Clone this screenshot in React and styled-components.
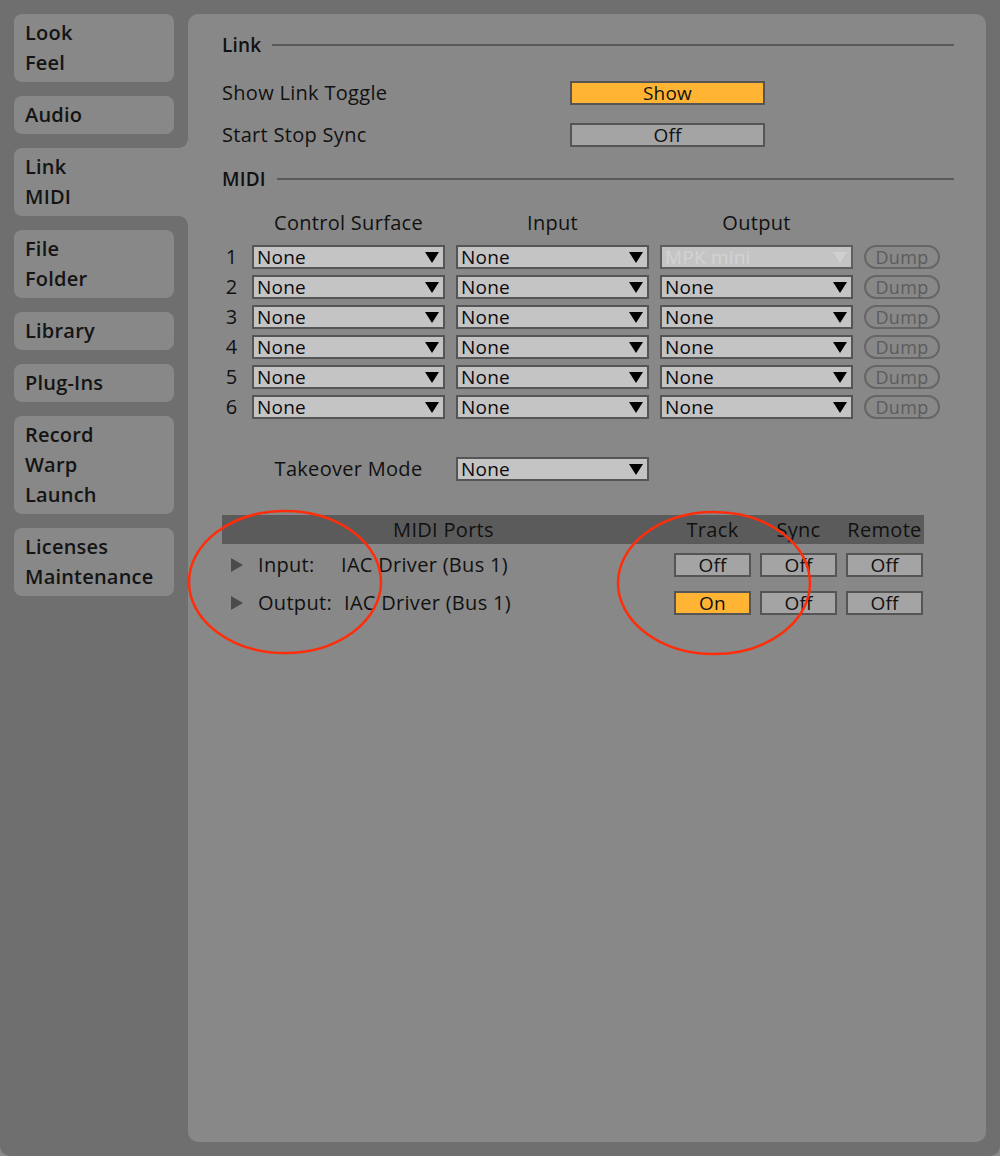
import React from "react";
import styled, { createGlobalStyle } from "styled-components";

const DARK = "#6f6f6f";
const PANEL = "#888888";
const BORDER = "#555555";

const Global = createGlobalStyle`
  html, body { margin: 0; padding: 0; background: #8a8a8a; }
  * { box-sizing: border-box; }
  body { font-family: "Open Sans", "DejaVu Sans", sans-serif; color: #111; }
`;

const Frame = styled.div`
  width: 1000px;
  height: 1156px;
  background: ${DARK};
  border-radius: 0 0 10px 10px;
  display: flex;
  gap: 14px;
  padding: 14px;
`;

const Sidebar = styled.nav`
  width: 160px;
  display: flex;
  flex-direction: column;
  gap: 14px;
  flex-shrink: 0;
`;

const Tab = styled.div`
  position: relative;
  background: ${PANEL};
  border-radius: ${(p) => (p.$selected ? "8px 0 0 8px" : "8px")};
  margin-right: ${(p) => (p.$selected ? "-14px" : "0")};
  padding: 4px 11px;
  font-size: 20px;
  font-weight: 600;
  letter-spacing: 0.2px;
  line-height: 30px;
  color: #141414;
  &::before, &::after {
    content: "";
    display: ${(p) => (p.$selected ? "block" : "none")};
    position: absolute;
    right: 0;
    width: 9px;
    height: 9px;
  }
  &::before {
    top: -9px;
    background: radial-gradient(circle at 0 0, ${DARK} 8.5px, ${PANEL} 9px);
  }
  &::after {
    bottom: -9px;
    background: radial-gradient(circle at 0 100%, ${DARK} 8.5px, ${PANEL} 9px);
  }
`;

const TabLine = styled.div``;

const Panel = styled.main`
  flex: 1;
  background: ${PANEL};
  border-radius: 10px;
  padding: 16px 32px 0 34px;
  display: flex;
  flex-direction: column;
  font-size: 20px;
  letter-spacing: 0.3px;
`;

const Heading = styled.div`
  display: flex;
  align-items: center;
  gap: 11px;
  height: 30px;
  font-weight: 600;
  font-size: 19px;
  letter-spacing: 0.2px;
  margin-top: ${(p) => p.$mt || 0}px;
  &::after {
    content: "";
    flex: 1;
    height: 2px;
    background: #5a5a5a;
  }
`;

const SettingRow = styled.div`
  display: flex;
  align-items: center;
  height: 24px;
  margin-top: ${(p) => p.$mt}px;
`;

const SettingLabel = styled.div`
  width: 348px;
  line-height: 24px;
`;

const Toggle = styled.div`
  width: ${(p) => p.$w || 195}px;
  height: 24px;
  border: 2px solid ${BORDER};
  background: ${(p) => (p.$on ? "#ffb533" : "#a4a4a4")};
  display: flex;
  align-items: center;
  justify-content: center;
  font-size: 19px;
  letter-spacing: 0.2px;
  line-height: 20px;
  color: #111;
`;

const MidiGrid = styled.div`
  display: grid;
  grid-template-columns: 19px 193px 193px 193px 76px;
  column-gap: 11px;
  row-gap: 6px;
  margin-top: 18px;
  align-items: center;
`;

const ColHead = styled.div`
  text-align: center;
  line-height: 22px;
  margin-bottom: 5px;
  white-space: nowrap;
  grid-column: ${(p) => p.$col};
`;

const RowNum = styled.div`
  text-align: center;
  line-height: 24px;
  grid-column: 1;
`;

const Select = styled.div`
  height: 24px;
  border: 2px solid ${(p) => (p.$disabled ? "#5e5e5e" : BORDER)};
  background: #c4c4c4;
  display: flex;
  align-items: center;
  justify-content: space-between;
  padding: 0 4px 0 3px;
  font-size: 19px;
  letter-spacing: 0.2px;
  color: ${(p) => (p.$disabled ? "#d3d3d3" : "#0a0a10")};
  grid-column: ${(p) => p.$col || "auto"};
`;

const Arrow = styled.svg`
  width: 14px;
  height: 11px;
  flex-shrink: 0;
`;

const Dump = styled.div`
  height: 24px;
  border: 2px solid #666;
  border-radius: 12px;
  color: #5c5c5c;
  font-size: 18px;
  display: flex;
  align-items: center;
  justify-content: center;
`;

const TakeoverLabel = styled.div`
  grid-column: 2;
  text-align: center;
  line-height: 24px;
  white-space: nowrap;
  margin-top: 32px;
`;

const TakeoverSelect = styled(Select)`
  margin-top: 32px;
`;

const Ports = styled.section`
  position: relative;
  margin-top: 34px;
  width: 702px;
`;

const PortsGrid = styled.div`
  display: grid;
  grid-template-columns: 443px 77px 77px 77px;
  column-gap: 9px;
  align-items: center;
`;

const PortsHeader = styled(PortsGrid)`
  background: #5b5b5b;
  height: 29px;
  line-height: 29px;
  margin-bottom: 9px;
`;

const PortsHeadCell = styled.div`
  text-align: center;
  white-space: nowrap;
`;

const PortRow = styled(PortsGrid)`
  height: 24px;
  margin-bottom: 14px;
`;

const PortName = styled.div`
  display: flex;
  align-items: center;
  line-height: 24px;
`;

const Expander = styled.svg`
  width: 12px;
  height: 14px;
  margin: 0 15px 0 9px;
`;

const PortKind = styled.span`
  width: ${(p) => p.$w}px;
`;

const Circles = styled.svg`
  position: absolute;
  left: 0;
  top: 0;
  width: 702px;
  height: 140px;
  overflow: visible;
  pointer-events: none;
`;

const DownArrow = ({ color = "#000" }) => (
  <Arrow viewBox="0 0 14 11">
    <polygon points="0,0 14,0 7,11" fill={color} />
  </Arrow>
);

const Dropdown = ({ value, col, disabled }) => (
  <Select $col={col} $disabled={disabled}>
    <span>{value}</span>
    <DownArrow color={disabled ? "#d0d0d0" : "#000"} />
  </Select>
);

const tabs = [
  ["Look", "Feel"],
  ["Audio"],
  ["Link", "MIDI"],
  ["File", "Folder"],
  ["Library"],
  ["Plug-Ins"],
  ["Record", "Warp", "Launch"],
  ["Licenses", "Maintenance"],
];

export default function App() {
  return (
    <>
      <Global />
      <Frame>
        <Sidebar>
          {tabs.map((t, i) => (
            <Tab key={i} $selected={i === 2}>
              {t.map((l) => (
                <TabLine key={l}>{l}</TabLine>
              ))}
            </Tab>
          ))}
        </Sidebar>
        <Panel>
          <Heading>Link</Heading>
          <SettingRow $mt={21}>
            <SettingLabel>Show Link Toggle</SettingLabel>
            <Toggle $on>Show</Toggle>
          </SettingRow>
          <SettingRow $mt={18}>
            <SettingLabel>Start Stop Sync</SettingLabel>
            <Toggle>Off</Toggle>
          </SettingRow>
          <Heading $mt={17}>MIDI</Heading>

          <MidiGrid>
            <ColHead $col={2}>Control Surface</ColHead>
            <ColHead $col={3}>Input</ColHead>
            <ColHead $col={4}>Output</ColHead>
            {[1, 2, 3, 4, 5, 6].map((n) => (
              <React.Fragment key={n}>
                <RowNum>{n}</RowNum>
                <Dropdown value="None" />
                <Dropdown value="None" />
                {n === 1 ? (
                  <Dropdown value="MPK mini" disabled />
                ) : (
                  <Dropdown value="None" />
                )}
                <Dump>Dump</Dump>
              </React.Fragment>
            ))}
            <TakeoverLabel>Takeover Mode</TakeoverLabel>
            <TakeoverSelect $col={3}>
              <span>None</span>
              <DownArrow />
            </TakeoverSelect>
          </MidiGrid>

          <Ports>
            <PortsHeader>
              <PortsHeadCell>MIDI Ports</PortsHeadCell>
              <PortsHeadCell>Track</PortsHeadCell>
              <PortsHeadCell>Sync</PortsHeadCell>
              <PortsHeadCell>Remote</PortsHeadCell>
            </PortsHeader>
            <PortRow>
              <PortName>
                <Expander viewBox="0 0 12 14">
                  <polygon points="0,0 12,7 0,14" fill="#4a4a4a" />
                </Expander>
                <PortKind $w={83}>Input:</PortKind>
                IAC Driver (Bus 1)
              </PortName>
              <Toggle $w={77}>Off</Toggle>
              <Toggle $w={77}>Off</Toggle>
              <Toggle $w={77}>Off</Toggle>
            </PortRow>
            <PortRow>
              <PortName>
                <Expander viewBox="0 0 12 14">
                  <polygon points="0,0 12,7 0,14" fill="#4a4a4a" />
                </Expander>
                <PortKind $w={86}>Output:</PortKind>
                IAC Driver (Bus 1)
              </PortName>
              <Toggle $w={77} $on>On</Toggle>
              <Toggle $w={77}>Off</Toggle>
              <Toggle $w={77}>Off</Toggle>
            </PortRow>
            <Circles viewBox="0 0 702 140">
              <ellipse cx="63" cy="67" rx="96" ry="71" fill="none" stroke="#ff2d0a" strokeWidth="2.5" />
              <ellipse cx="492" cy="68" rx="96" ry="71" fill="none" stroke="#ff2d0a" strokeWidth="2.5" />
            </Circles>
          </Ports>
        </Panel>
      </Frame>
    </>
  );
}
